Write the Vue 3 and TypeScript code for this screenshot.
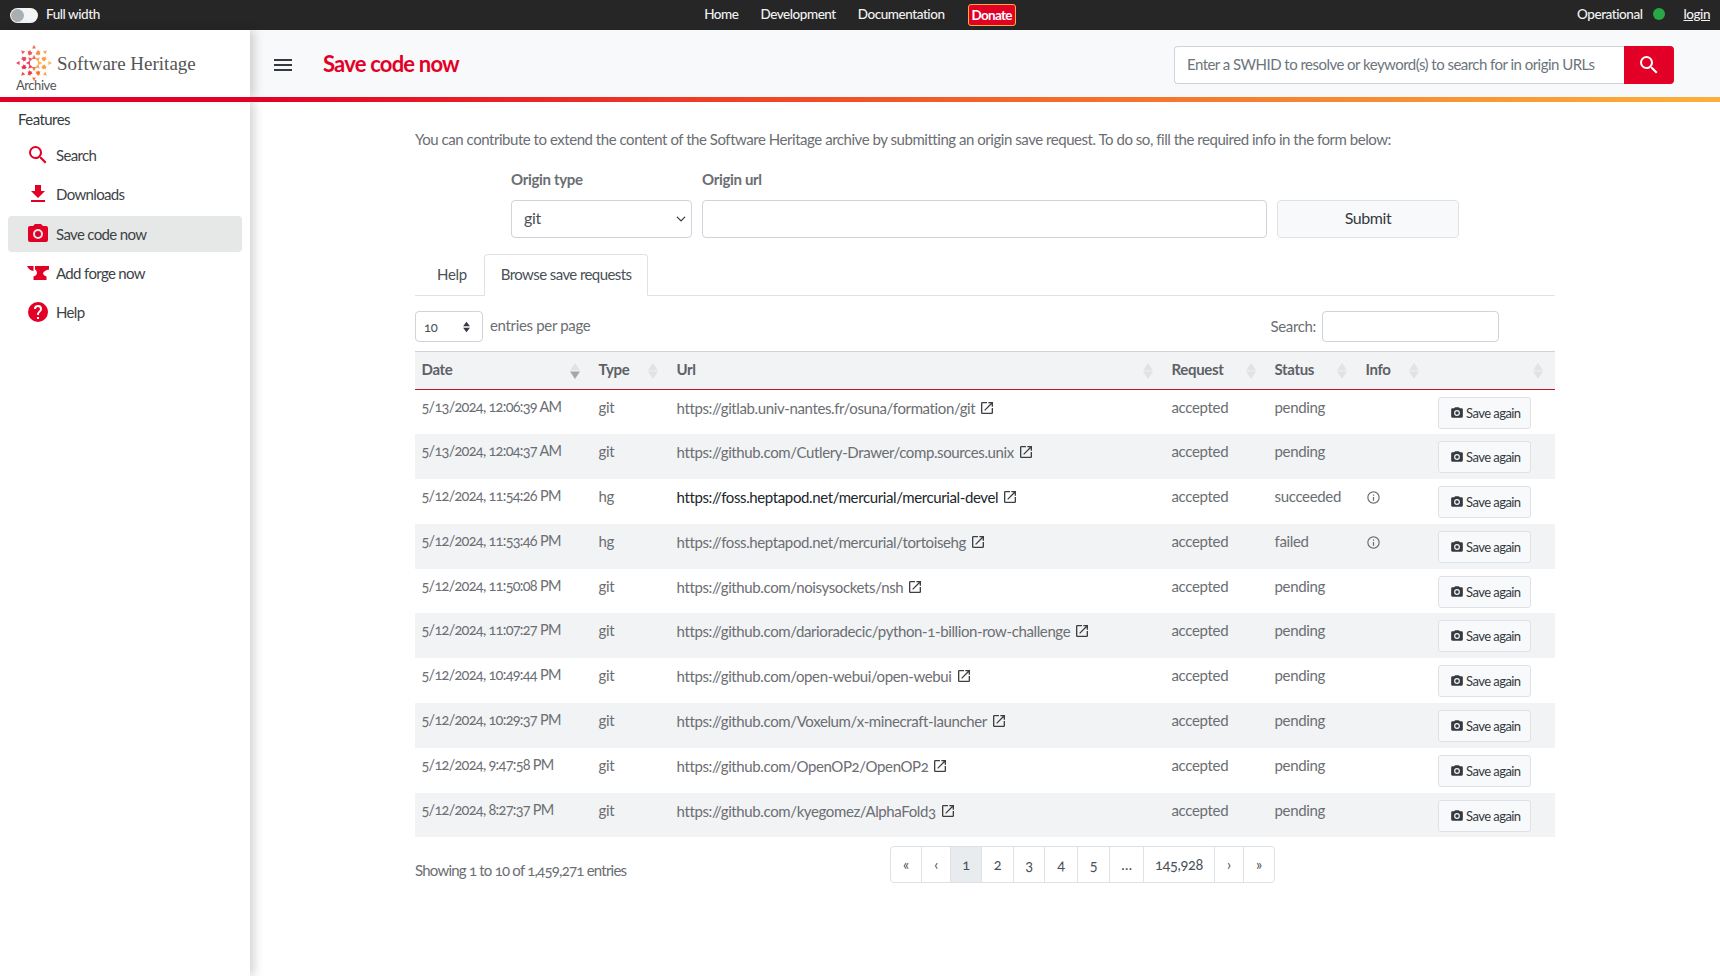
<script setup lang="ts">
interface Row { date: string; type: string; url: string; status: string; info?: boolean; dark?: boolean }
const rows: Row[] = [
  { date: '5/13/2024, 12:06:39 AM', type: 'git', url: 'https://gitlab.univ-nantes.fr/osuna/formation/git', status: 'pending' },
  { date: '5/13/2024, 12:04:37 AM', type: 'git', url: 'https://github.com/Cutlery-Drawer/comp.sources.unix', status: 'pending' },
  { date: '5/12/2024, 11:54:26 PM', type: 'hg', url: 'https://foss.heptapod.net/mercurial/mercurial-devel', status: 'succeeded', info: true, dark: true },
  { date: '5/12/2024, 11:53:46 PM', type: 'hg', url: 'https://foss.heptapod.net/mercurial/tortoisehg', status: 'failed', info: true },
  { date: '5/12/2024, 11:50:08 PM', type: 'git', url: 'https://github.com/noisysockets/nsh', status: 'pending' },
  { date: '5/12/2024, 11:07:27 PM', type: 'git', url: 'https://github.com/darioradecic/python-1-billion-row-challenge', status: 'pending' },
  { date: '5/12/2024, 10:49:44 PM', type: 'git', url: 'https://github.com/open-webui/open-webui', status: 'pending' },
  { date: '5/12/2024, 10:29:37 PM', type: 'git', url: 'https://github.com/Voxelum/x-minecraft-launcher', status: 'pending' },
  { date: '5/12/2024, 9:47:58 PM', type: 'git', url: 'https://github.com/OpenOP2/OpenOP2', status: 'pending' },
  { date: '5/12/2024, 8:27:37 PM', type: 'git', url: 'https://github.com/kyegomez/AlphaFold3', status: 'pending' },
]
const cols = [
  { label: 'Date', w: 177, active: true },
  { label: 'Type', w: 78 },
  { label: 'Url', w: 495 },
  { label: 'Request', w: 103 },
  { label: 'Status', w: 91 },
  { label: 'Info', w: 72 },
  { label: '', w: 124 },
]
const pages = [
  { t: '«', w: 31 }, { t: '‹', w: 29 }, { t: '1', w: 31, active: true }, { t: '2', w: 32 }, { t: '3', w: 31 },
  { t: '4', w: 33 }, { t: '5', w: 32 }, { t: '…', w: 34 }, { t: '145,928', w: 71 }, { t: '›', w: 29 }, { t: '»', w: 30 },
]
const icons = {
  search: 'M9.5,3A6.5,6.5 0 0,1 16,9.5C16,11.11 15.41,12.59 14.44,13.73L14.71,14H15.5L20.5,19L19,20.5L14,15.5V14.71L13.73,14.44C12.59,15.41 11.11,16 9.5,16A6.5,6.5 0 0,1 3,9.5A6.5,6.5 0 0,1 9.5,3M9.5,5C7,5 5,7 5,9.5C5,12 7,14 9.5,14C12,14 14,12 14,9.5C14,7 12,5 9.5,5Z',
  download: 'M5,20H19V18H5M19,9H15V3H9V9H5L12,16L19,9Z',
  camera: 'M4,4H7L9,2H15L17,4H20A2,2 0 0,1 22,6V18A2,2 0 0,1 20,20H4A2,2 0 0,1 2,18V6A2,2 0 0,1 4,4M12,7A5,5 0 0,0 7,12A5,5 0 0,0 12,17A5,5 0 0,0 17,12A5,5 0 0,0 12,7M12,9A3,3 0 0,1 15,12A3,3 0 0,1 12,15A3,3 0 0,1 9,12A3,3 0 0,1 12,9Z',
  anvil: 'M1,5H7.5V10C4.5,9.5 2.5,8 1,5Z M9,5H23V8.5C20,9 17.5,10.5 17,12.5C17.5,14 19,15 20.5,15.5V19H7.5V15.5C9,15 10.5,14 11,12.5C11,10 10,9 9,8.5Z',
  help: 'M15.07,11.25L14.17,12.17C13.45,12.89 13,13.5 13,15H11V14.5C11,13.39 11.45,12.39 12.17,11.67L13.41,10.41C13.78,10.05 14,9.55 14,9C14,7.89 13.1,7 12,7A2,2 0 0,0 10,9H8A4,4 0 0,1 12,5A4,4 0 0,1 16,9C16,9.88 15.64,10.67 15.07,11.25M13,19H11V17H13M12,2A10,10 0 0,0 2,12A10,10 0 0,0 12,22A10,10 0 0,0 22,12C22,6.47 17.5,2 12,2Z',
  open: 'M14,3V5H17.59L7.76,14.83L9.17,16.24L19,6.41V10H21V3M19,19H5V5H12V3H5C3.89,3 3,3.9 3,5V19A2,2 0 0,0 5,21H19A2,2 0 0,0 21,19V12H19V19Z',
  info: 'M11,9H13V7H11M12,20C7.59,20 4,16.41 4,12C4,7.59 7.59,4 12,4C16.41,4 20,7.59 20,12C20,16.41 16.41,20 12,20M12,2A10,10 0 0,0 2,12A10,10 0 0,0 12,22A10,10 0 0,0 22,12A10,10 0 0,0 12,2M11,17H13V11H11V17Z',
  menu: 'M3,6H21V8H3V6M3,11H21V13H3V11M3,16H21V18H3V16Z',
}
const nav = [
  { label: 'Search', icon: icons.search },
  { label: 'Downloads', icon: icons.download },
  { label: 'Save code now', icon: icons.camera, active: true },
  { label: 'Add forge now', icon: icons.anvil },
  { label: 'Help', icon: icons.help },
]
// Logo: three rings of small arrowheads round the centre, red on the left, orange on the right
const logoColors = ['#fba93b', '#f9963a', '#f4622d', '#ec2a3c', '#e8264a', '#ef3f52', '#f0533f', '#f9963a']
const logoTriangles: { points: string; fill: string }[] = []
for (let i = 0; i < 8; i++) {
  const a = (i * Math.PI) / 4
  for (const [r, s, spread] of [[5.5, 2.7, 0], [11, 3, 0.38], [15.8, 2.4, 0]]) {
    for (const off of spread ? [-spread, spread] : [0]) {
      const b = a + off
      const cx = 18 + r * Math.cos(b)
      const cy = 18 + r * Math.sin(b)
      const pt = (ang: number, d: number) => `${(cx + d * Math.cos(ang)).toFixed(2)},${(cy + d * Math.sin(ang)).toFixed(2)}`
      logoTriangles.push({
        points: [pt(a, s), pt(a + 2.2, s), pt(a - 2.2, s)].join(' '),
        fill: logoColors[i],
      })
    }
  }
}
</script>

<template>
  <div class="page">
    <div class="topbar">
      <div class="top-left">
        <span class="toggle"><span class="knob"></span></span>
        <span class="full">Full width</span>
      </div>
      <nav class="top-links">
        <a>Home</a>
        <a>Development</a>
        <a>Documentation</a>
        <a class="donate">Donate</a>
      </nav>
      <div class="top-right">
        <span>Operational</span>
        <span class="dot"></span>
        <a class="login">login</a>
      </div>
    </div>

    <div class="head">
      <div class="brand">
        <div class="brand-line">
          <svg class="logo" viewBox="0 0 36 36" width="36" height="36">
            <polygon v-for="(t, i) in logoTriangles" :key="i" :points="t.points" :fill="t.fill" fill-opacity="0.85" />
          </svg>
          <span class="brand-name">Software Heritage</span>
        </div>
        <span class="archive">Archive</span>
      </div>
      <div class="navbar">
        <svg class="burger" viewBox="3 6 18 12" width="18" height="12" preserveAspectRatio="none"><path :d="icons.menu" /></svg>
        <h1>Save code now</h1>
        <div class="swh-search">
          <input class="swh-input" placeholder="Enter a SWHID to resolve or keyword(s) to search for in origin URLs" />
          <button class="swh-btn"><svg viewBox="0 0 24 24" width="24" height="24"><path :d="icons.search" /></svg></button>
        </div>
      </div>
    </div>
    <div class="rainbow"></div>

    <div class="body">
      <aside class="sidebar">
        <div class="features">Features</div>
        <a v-for="n in nav" :key="n.label" class="nav-item" :class="{ active: n.active }">
          <svg viewBox="0 0 24 24" width="24" height="24"><path :d="n.icon" /></svg>
          <span>{{ n.label }}</span>
        </a>
      </aside>

      <main class="content">
        <p class="intro">You can contribute to extend the content of the Software Heritage archive by submitting an origin save request. To do so, fill the required info in the form below:</p>

        <form class="save-form" @submit.prevent>
          <div class="field f-type">
            <label>Origin type</label>
            <div class="select-box"><span class="sel-text">git</span>
              <svg viewBox="0 0 16 16" width="10" height="10"><path d="M2 5l6 6 6-6" fill="none" stroke="#343a40" stroke-width="2" stroke-linecap="round" stroke-linejoin="round"/></svg>
            </div>
          </div>
          <div class="field f-url">
            <label>Origin url</label>
            <input class="form-input" />
          </div>
          <button class="submit" type="button">Submit</button>
        </form>

        <div class="tabs">
          <a class="tab">Help</a>
          <a class="tab active">Browse save requests</a>
        </div>

        <div class="tools">
          <div class="entries">
            <div class="len-select"><span>10</span>
              <svg viewBox="0 0 10 14" width="9" height="12"><path d="M5 1l4 5H1zM5 13L1 8h8z" fill="#343a40"/></svg>
            </div>
            <span>entries per page</span>
          </div>
          <div class="tsearch">
            <span>Search:</span>
            <input class="tsearch-input" />
          </div>
        </div>

        <table class="grid">
          <colgroup><col v-for="c in cols" :key="c.label" :style="{ width: c.w + 'px' }" /></colgroup>
          <thead>
            <tr>
              <th v-for="c in cols" :key="c.label">
                <div class="th-in">
                  <span>{{ c.label }}</span>
                  <svg class="sort" viewBox="0 0 10 16" width="10" height="16">
                    <path d="M5 0l5 7.4H0z" fill="#e0e2e5"/>
                    <path d="M5 16L0 8.6h10z" :fill="c.active ? '#a4a8ad' : '#e0e2e5'"/>
                  </svg>
                </div>
              </th>
            </tr>
          </thead>
          <tbody>
            <tr v-for="r in rows" :key="r.date">
              <td class="date">{{ r.date }}</td>
              <td>{{ r.type }}</td>
              <td class="url" :class="{ dark: r.dark }">{{ r.url }}<svg class="ext" viewBox="0 0 24 24" width="16" height="16"><path :d="icons.open" /></svg></td>
              <td>accepted</td>
              <td>{{ r.status }}</td>
              <td><svg v-if="r.info" class="info" viewBox="0 0 24 24" width="15" height="15"><path :d="icons.info" /></svg></td>
              <td class="action">
                <button class="again" type="button"><svg viewBox="0 0 24 24" width="14" height="14"><path :d="icons.camera" /></svg>Save again</button>
              </td>
            </tr>
          </tbody>
        </table>

        <div class="foot">
          <span class="showing">Showing 1 to 10 of 1,459,271 entries</span>
          <div class="pager">
            <a v-for="p in pages" :key="p.t" class="page-cell" :class="{ active: p.active }" :style="{ width: p.w + 'px' }">{{ p.t }}</a>
          </div>
        </div>
      </main>
    </div>
  </div>
</template>

<style>
html, body { margin: 0; padding: 0; }
body { overflow: hidden; }
</style>

<style scoped>
.page {
  width: 1720px;
  height: 976px;
  display: flex;
  flex-direction: column;
  overflow: hidden;
  font-family: Lato, "Open Sans", sans-serif;
  font-size: 15px;
  letter-spacing: -0.33px;
  font-variant-numeric: oldstyle-nums;
  color: #6b6e72;
  background: #fff;
}
.topbar {
  height: 30px;
  flex: none;
  background: #262626;
  color: #f2f2f2;
  display: grid;
  grid-template-columns: 1fr auto 1fr;
  align-items: center;
  font-size: 13.5px;
  font-weight: 500;
  letter-spacing: -0.45px;
  padding-bottom: 2px;
  box-sizing: border-box;
}
.top-left { display: flex; align-items: center; padding-left: 10px; }
.toggle {
  width: 28px;
  height: 15px;
  border-radius: 8px;
  background: #f4f4f4;
  display: flex;
  align-items: center;
  padding-left: 1px;
  box-sizing: border-box;
  margin-top: 2px;
}
.knob { width: 13px; height: 13px; border-radius: 50%; background: #a9aeb3; }
.full { margin-left: 8px; }
.top-links { display: flex; align-items: center; gap: 22px; }
.donate {
  background: #e20026;
  border: 1px solid #fbb03b;
  border-radius: 3px;
  padding: 2px 3px;
  font-weight: 700;
  letter-spacing: -0.7px;
  color: #fff;
  margin: 1px 0 0 1px;
}
.top-right { display: flex; align-items: center; justify-content: flex-end; padding-right: 10px; }
.dot { width: 12px; height: 12px; border-radius: 50%; background: #28a745; margin: 0 0 0 11px; }
.login { margin-left: 18px; text-decoration: underline; }

.head { height: 67px; flex: none; display: flex; }
.brand {
  width: 250px;
  flex: none;
  background: #fff;
  position: relative;
  z-index: 2;
  box-shadow: 4px 0 10px rgba(0, 0, 0, 0.18);
  padding: 15px 0 0 16px;
  box-sizing: border-box;
}
.brand-line { display: flex; align-items: center; height: 33px; }
.logo { flex: none; margin-top: 3px; }
.brand-name {
  font-family: "Liberation Serif", serif;
  font-size: 19px;
  letter-spacing: 0;
  color: #555;
  margin: 4px 0 0 5px;
}
.archive { display: block; font-size: 13px; letter-spacing: -0.45px; color: #555; margin-top: -1px; line-height: 16px; }
.navbar {
  flex: 1;
  background: #f8f9fa;
  display: flex;
  align-items: center;
  padding: 2px 46px 0 24px;
}
.burger { fill: #343a40; flex: none; margin-top: 1px; }
h1 {
  margin: -2px 0 0 31px;
  font-size: 22px;
  font-weight: 700;
  letter-spacing: -0.8px;
  color: #e20026;
}
.swh-search { margin-left: auto; display: flex; width: 500px; height: 38px; }
.swh-input {
  flex: 1;
  min-width: 0;
  box-sizing: border-box;
  border: 1px solid #ced4da;
  border-right: 0;
  border-radius: 4px 0 0 4px;
  padding: 0 12px 1px;
  font: inherit;
  font-size: 15px;
  letter-spacing: -0.53px;
  background: #fff;
}
.swh-input::placeholder { color: #6c757d; opacity: 1; }
.swh-btn {
  width: 50px;
  border: 0;
  background: #e20026;
  border-radius: 0 4px 4px 0;
  fill: #fff;
  display: flex;
  align-items: center;
  justify-content: center;
  padding: 0;
}
.rainbow {
  height: 5px;
  flex: none;
  position: relative;
  z-index: 3;
  background: linear-gradient(to right, #e20026 0%, #e20026 15%, #ef3b26 40%, #f4692a 60%, #fbb03b 100%);
}

.body { flex: 1; display: flex; min-height: 0; }
.sidebar {
  width: 250px;
  flex: none;
  background: #fff;
  box-shadow: 4px 0 10px rgba(0, 0, 0, 0.18);
  padding: 7px 8px 0;
  box-sizing: border-box;
  color: #3d4246;
  font-size: 15px;
  letter-spacing: -0.65px;
}
.features { padding-left: 10px; height: 24px; line-height: 20px; color: #343a40; letter-spacing: -0.55px; margin-bottom: 4px; }
.nav-item {
  display: flex;
  align-items: center;
  height: 36px;
  margin-bottom: 3.3px;
  border-radius: 4px;
  padding-left: 18px;
  fill: #e20026;
}
.nav-item span { margin-left: 6px; }
.nav-item.active { background: #e6e8e8; }

.content { width: 1140px; margin: 0 auto; }
.intro { margin: 27px 0 0; line-height: 20px; letter-spacing: -0.46px; }
.save-form { display: flex; align-items: flex-end; padding-left: 96px; margin-top: 20px; }
.field { display: flex; flex-direction: column; }
.field label { font-weight: 700; line-height: 20px; margin-bottom: 11px; color: #6b6e72; }
.f-type { width: 181px; }
.f-url { width: 565px; margin-left: 10px; }
.select-box {
  height: 38px;
  box-sizing: border-box;
  border: 1px solid #ced4da;
  border-radius: 4px;
  padding: 0 5px 0 12px;
  display: flex;
  align-items: center;
  justify-content: space-between;
  color: #495057;
  font-size: 16px;
}
.sel-text { margin-bottom: 3px; }
.form-input {
  height: 38px;
  box-sizing: border-box;
  border: 1px solid #ced4da;
  border-radius: 4px;
  background: #fff;
  width: 100%;
}
.submit {
  width: 182px;
  height: 38px;
  margin-left: 10px;
  padding: 0 0 3px;
  border: 1px solid #dee2e6;
  border-radius: 4px;
  background: #f8f9fa;
  font: inherit;
  font-size: 16px;
  letter-spacing: -0.4px;
  color: #343a40;
}
.tabs { display: flex; margin-top: 16px; border-bottom: 1px solid #dee2e6; height: 41px; }
.tab {
  padding: 0 16px 2px;
  height: 42px;
  box-sizing: border-box;
  display: flex;
  align-items: center;
  border: 1px solid transparent;
  border-radius: 4px 4px 0 0;
  color: #495057;
}
.tab:first-child { padding: 0 16px 2px 21px; }
.tab.active { border-color: #dee2e6 #dee2e6 #fff; background: #fff; letter-spacing: -0.58px; }
.tools { display: flex; justify-content: space-between; margin-top: 15px; height: 31px; }
.entries { display: flex; align-items: center; }
.entries > span { margin: -3px 0 0 7px; }
.len-select {
  width: 68px;
  height: 31px;
  box-sizing: border-box;
  border: 1px solid #ced4da;
  border-radius: 4px;
  display: flex;
  align-items: center;
  justify-content: space-between;
  padding: 0 11px 0 8px;
  font-size: 13px;
  color: #495057;
}
.tsearch { display: flex; align-items: center; padding-right: 56px; }
.tsearch > span { margin-bottom: 1px; }
.tsearch-input {
  width: 177px;
  height: 31px;
  box-sizing: border-box;
  margin-left: 6px;
  border: 1px solid #ced4da;
  border-radius: 4px;
}
.grid {
  margin-top: 9px;
  width: 1140px;
  table-layout: fixed;
  border-collapse: collapse;
}
th {
  height: 38px;
  padding: 0 17px 0 6.5px;
  background: #f2f3f5;
  border-top: 1px solid #cfd3d7;
  border-bottom: 1px solid #c8102e;
  text-align: left;
  font-weight: 700;
  color: #5d6165;
  box-sizing: border-box;
}
.th-in { display: flex; justify-content: space-between; align-items: center; }
.th-in span { margin-bottom: 3px; }
.sort { flex: none; margin-right: -5px; }
td {
  height: 44.8px;
  box-sizing: border-box;
  padding: 7px 6.5px 0;
  vertical-align: top;
  line-height: 20px;
  white-space: nowrap;
}
tbody tr:nth-child(even) td { background: #f2f3f5; }
.date { font-size: 14.5px; letter-spacing: -0.72px; }
.url { padding-top: 8px; letter-spacing: -0.38px; }
.url.dark { color: #212529; }
.ext { fill: #3c4043; margin-left: 4px; vertical-align: -2px; }
.info { fill: #6b6e72; margin-top: 4px; display: block; }
.action { padding: 7px 0 0 7px; }
.again {
  height: 32px;
  width: 93px;
  box-sizing: border-box;
  border: 1px solid #dee2e6;
  border-radius: 3px;
  background: #f8f9fa;
  font: inherit;
  font-size: 13px;
  letter-spacing: -0.55px;
  color: #343a40;
  fill: #343a40;
  display: flex;
  align-items: center;
  padding: 0 0 0 11px;
  white-space: nowrap;
}
.again svg { margin-right: 2px; flex: none; }
.foot { display: flex; align-items: flex-start; justify-content: space-between; margin-top: 9px; padding-right: 280px; }
.showing { margin-top: 14px; line-height: 20px; letter-spacing: -0.78px; }
.pager {
  display: flex;
  height: 37px;
  box-sizing: border-box;
  border: 1px solid #dee2e6;
  border-radius: 4px;
  overflow: hidden;
  font-size: 14.5px;
}
.page-cell {
  display: flex;
  align-items: center;
  justify-content: center;
  box-sizing: border-box;
  border-right: 1px solid #dee2e6;
  color: #495057;
  padding-bottom: 1px;
}
.page-cell:last-child { border-right: 0; }
.page-cell.active { background: #e9ecef; }
</style>
